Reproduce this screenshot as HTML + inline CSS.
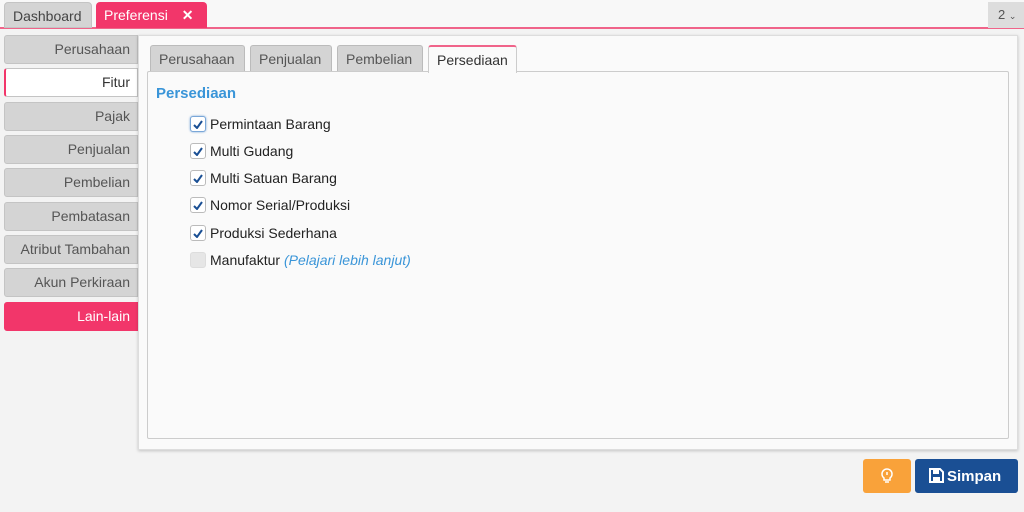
<!DOCTYPE html>
<html><head><meta charset="utf-8"><style>
*{box-sizing:border-box;margin:0;padding:0}
body{width:1024px;height:512px;overflow:hidden;background:#f3f3f3;font-family:"Liberation Sans",sans-serif;position:relative}
.top{position:absolute;left:0;top:0;width:1024px;height:29px;background:#f8f8f8;border-bottom:2px solid #f0648a}
.tab{position:absolute;top:2px;height:26px;border-radius:4px 4px 0 0;font-size:14px;line-height:26px;padding:0 8px}
.nav{position:absolute;left:4px;width:134px;height:29px;background:#d4d4d4;border:1px solid #c4c4c4;border-radius:3px 0 0 3px;text-align:right;padding-right:7px;font-size:14px;line-height:27px;color:#555}
.panel{position:absolute;left:138px;top:35px;width:880px;height:415px;background:#fafafa;border:1px solid #ddd;box-shadow:0 1px 3px rgba(0,0,0,.2)}
.itab{position:absolute;top:9px;height:27px;background:#d4d4d4;border:1px solid #bbb;border-bottom:none;border-radius:3px 3px 0 0;font-size:14px;line-height:26px;color:#555;padding:0 8px}
.box{position:absolute;left:8px;top:35px;width:862px;height:368px;border:1px solid #ccc;border-radius:2px;background:#fafafa}
.row{position:absolute;left:42px;font-size:14px;color:#222;height:18px;line-height:18px}
.cb{display:inline-block;width:16px;height:16px;border:1px solid #bbb;border-radius:3px;background:#fff;vertical-align:-3px;margin-right:4px;position:relative}
.cb svg{position:absolute;left:2px;top:3px}
</style></head><body>
<div class="top"></div>
<div class="tab" style="left:4px;width:88px;background:#d4d4d4;border:1px solid #c4c4c4;color:#444">Dashboard</div>
<div class="tab" style="left:96px;width:111px;background:#f2366a;color:#fff">Preferensi <b style="margin-left:10px">✕</b></div>
<div style="position:absolute;left:988px;top:2px;width:36px;height:26px;background:#ddd;font-size:13px;line-height:26px;color:#555;padding-left:10px">2 <span style="font-size:9px">⌄</span></div>
<div class="nav" style="top:35px">Perusahaan</div>
<div class="nav" style="top:68px;background:#fff;border-left:2px solid #f2366a;color:#333">Fitur</div>
<div class="nav" style="top:102px">Pajak</div>
<div class="nav" style="top:135px">Penjualan</div>
<div class="nav" style="top:168px">Pembelian</div>
<div class="nav" style="top:202px">Pembatasan</div>
<div class="nav" style="top:235px">Atribut Tambahan</div>
<div class="nav" style="top:268px">Akun Perkiraan</div>
<div class="nav" style="top:302px;background:#f2366a;border-color:#f2366a;color:#fff">Lain-lain</div>
<div class="panel">
<div class="itab" style="left:11px;width:95px">Perusahaan</div>
<div class="itab" style="left:111px;width:82px">Penjualan</div>
<div class="itab" style="left:198px;width:86px">Pembelian</div>
<div class="itab" style="left:289px;width:89px;background:#fafafa;border-color:#ccc;border-top:2px solid #f0648a;color:#333;height:28px;z-index:2">Persediaan</div>
<div class="box">
<div style="position:absolute;left:8px;top:13px;font-size:15px;font-weight:bold;color:#3a95d8">Persediaan</div>
<div class="row" style="top:43px"><span class="cb" style="border-color:#7aa7d8;box-shadow:0 0 2px #7aa7d8"><svg width="10" height="9"><path d="M1 5l3 3 5-7" stroke="#1a4f94" stroke-width="2" fill="none"/></svg></span>Permintaan Barang</div>
<div class="row" style="top:70px"><span class="cb"><svg width="10" height="9"><path d="M1 5l3 3 5-7" stroke="#1a4f94" stroke-width="2" fill="none"/></svg></span>Multi Gudang</div>
<div class="row" style="top:97px"><span class="cb"><svg width="10" height="9"><path d="M1 5l3 3 5-7" stroke="#1a4f94" stroke-width="2" fill="none"/></svg></span>Multi Satuan Barang</div>
<div class="row" style="top:124px"><span class="cb"><svg width="10" height="9"><path d="M1 5l3 3 5-7" stroke="#1a4f94" stroke-width="2" fill="none"/></svg></span>Nomor Serial/Produksi</div>
<div class="row" style="top:152px"><span class="cb"><svg width="10" height="9"><path d="M1 5l3 3 5-7" stroke="#1a4f94" stroke-width="2" fill="none"/></svg></span>Produksi Sederhana</div>
<div class="row" style="top:179px"><span class="cb" style="background:#e6e6e6;border-color:#ddd"></span>Manufaktur <i style="color:#3a95d8">(Pelajari lebih lanjut)</i></div>
</div>
</div>
<div style="position:absolute;left:863px;top:459px;width:48px;height:34px;background:#f9a23a;border-radius:3px">
<svg width="14" height="16" viewBox="0 0 14 16" style="position:absolute;left:17px;top:9px"><path d="M4 10C2 8.5 2 7 2 6a5 5 0 0 1 10 0c0 1 0 2.5-2 4v2H4z" fill="none" stroke="#fff" stroke-width="1.5"/><path d="M5 14h4" stroke="#fff" stroke-width="1.5"/><path d="M7 4v3" stroke="#fff" stroke-width="1.5"/></svg></div>
<div style="position:absolute;left:915px;top:459px;width:103px;height:34px;background:#1a4f94;border-radius:3px;color:#fff;font-size:15px;font-weight:bold;line-height:35px;padding-left:14px">
<svg width="15" height="15" viewBox="0 0 15 15" style="vertical-align:-2px;margin-right:3px"><path d="M1 1h10l3 3v10H1z" fill="none" stroke="#fff" stroke-width="2"/><rect x="4" y="2" width="6" height="4" fill="#fff"/><rect x="4" y="9" width="7" height="4" fill="#fff"/></svg>Simpan</div>
</body></html>
